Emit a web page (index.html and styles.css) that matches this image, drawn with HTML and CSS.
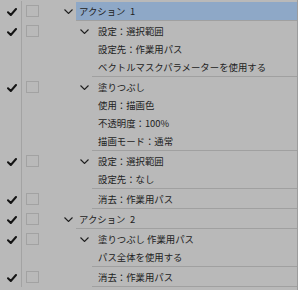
FILE: index.html
```html
<!DOCTYPE html>
<html lang="ja">
<head>
<meta charset="utf-8">
<link rel="stylesheet" href="styles.css">
</head>
<body>
<div class="panel">
  <div class="step l1">
    <div class="check"><svg class="tick" viewBox="0 0 10 8"><path d="M1 4.2 L3.8 7 L9 1"/></svg></div>
    <div class="box"><span class="cb"></span></div>
    <div class="twisty"><svg class="chev" viewBox="0 0 9 5"><path d="M0.5 0.5 L4.5 4.5 L8.5 0.5"/></svg></div>
    <div class="body"><div class="row sel">アクション&ensp;1</div></div>
  </div>
  <div class="step l2">
    <div class="check"><svg class="tick" viewBox="0 0 10 8"><path d="M1 4.2 L3.8 7 L9 1"/></svg></div>
    <div class="box"><span class="cb"></span></div>
    <div class="indent"></div>
    <div class="twisty"><svg class="chev" viewBox="0 0 9 5"><path d="M0.5 0.5 L4.5 4.5 L8.5 0.5"/></svg></div>
    <div class="body">
      <div class="row">設定：選択範囲</div>
      <div class="row">設定先：作業用パス</div>
      <div class="row">ベクトルマスクパラメーターを使用する</div>
    </div>
  </div>
  <div class="step l2">
    <div class="check"><svg class="tick" viewBox="0 0 10 8"><path d="M1 4.2 L3.8 7 L9 1"/></svg></div>
    <div class="box"><span class="cb"></span></div>
    <div class="indent"></div>
    <div class="twisty"><svg class="chev" viewBox="0 0 9 5"><path d="M0.5 0.5 L4.5 4.5 L8.5 0.5"/></svg></div>
    <div class="body">
      <div class="row">塗りつぶし</div>
      <div class="row">使用：描画色</div>
      <div class="row">不透明度：100%</div>
      <div class="row">描画モード：通常</div>
    </div>
  </div>
  <div class="step l2">
    <div class="check"><svg class="tick" viewBox="0 0 10 8"><path d="M1 4.2 L3.8 7 L9 1"/></svg></div>
    <div class="box"><span class="cb"></span></div>
    <div class="indent"></div>
    <div class="twisty"><svg class="chev" viewBox="0 0 9 5"><path d="M0.5 0.5 L4.5 4.5 L8.5 0.5"/></svg></div>
    <div class="body">
      <div class="row">設定：選択範囲</div>
      <div class="row">設定先：なし</div>
    </div>
  </div>
  <div class="step l2 last">
    <div class="check"><svg class="tick" viewBox="0 0 10 8"><path d="M1 4.2 L3.8 7 L9 1"/></svg></div>
    <div class="box"><span class="cb"></span></div>
    <div class="indent"></div>
    <div class="twisty"></div>
    <div class="body">
      <div class="row">消去：作業用パス</div>
    </div>
  </div>
  <div class="step l1">
    <div class="check"><svg class="tick" viewBox="0 0 10 8"><path d="M1 4.2 L3.8 7 L9 1"/></svg></div>
    <div class="box"><span class="cb"></span></div>
    <div class="twisty"><svg class="chev" viewBox="0 0 9 5"><path d="M0.5 0.5 L4.5 4.5 L8.5 0.5"/></svg></div>
    <div class="body"><div class="row">アクション&ensp;2</div></div>
  </div>
  <div class="step l2">
    <div class="check"><svg class="tick" viewBox="0 0 10 8"><path d="M1 4.2 L3.8 7 L9 1"/></svg></div>
    <div class="box"><span class="cb"></span></div>
    <div class="indent"></div>
    <div class="twisty"><svg class="chev" viewBox="0 0 9 5"><path d="M0.5 0.5 L4.5 4.5 L8.5 0.5"/></svg></div>
    <div class="body">
      <div class="row">塗りつぶし 作業用パス</div>
      <div class="row">パス全体を使用する</div>
    </div>
  </div>
  <div class="step l2">
    <div class="check"><svg class="tick" viewBox="0 0 10 8"><path d="M1 4.2 L3.8 7 L9 1"/></svg></div>
    <div class="box"><span class="cb"></span></div>
    <div class="indent"></div>
    <div class="twisty"></div>
    <div class="body">
      <div class="row">消去：作業用パス</div>
    </div>
  </div>
</div>
</body>
</html>
```

FILE: styles.css
```css
html, body {
  margin: 0;
  padding: 0;
  background: #b9b9b9;
}
.panel {
  width: 297px;
  height: 290px;
  border-right: 1px solid #9c9c9c;
  padding-top: 1px;
  box-sizing: content-box;
  font-family: "Noto Sans CJK JP", "Noto Sans", sans-serif;
  font-size: 9.4px;
  color: #222222;
  overflow: hidden;
}
.step {
  display: flex;
  align-items: stretch;
}
.check {
  width: 22px;
  border-right: 1px solid #a3a3a3;
  display: flex;
  justify-content: center;
  padding-top: 7px;
  box-sizing: border-box;
  flex: none;
}
.tick {
  width: 10px;
  height: 8px;
  margin-left: 2px;
  fill: none;
  stroke: #141414;
  stroke-width: 2;
  stroke-linecap: round;
  stroke-linejoin: round;
}
.box {
  width: 38px;
  flex: none;
  padding: 4px 0 0 4px;
  box-sizing: border-box;
}
.cb {
  display: block;
  width: 13px;
  height: 12px;
  border: 1px solid #a2a2a2;
  box-sizing: border-box;
}
.indent {
  width: 16px;
  flex: none;
}
.twisty {
  width: 16px;
  flex: none;
  display: flex;
  justify-content: center;
  padding-top: 8px;
  box-sizing: border-box;
}
.chev {
  width: 9px;
  height: 5px;
  fill: none;
  stroke: #1e1e1e;
  stroke-width: 1.1;
}
.body {
  flex: 1;
  padding-top: 1px;
  border-bottom: 1px solid #a0a0a0;
}
.row {
  height: 18px;
  line-height: 18px;
  white-space: nowrap;
}
.l1 .row { padding-left: 3px; }
.l2 .row { padding-left: 6px; }
.row.sel {
  background: #8ea8c7;
}
```
